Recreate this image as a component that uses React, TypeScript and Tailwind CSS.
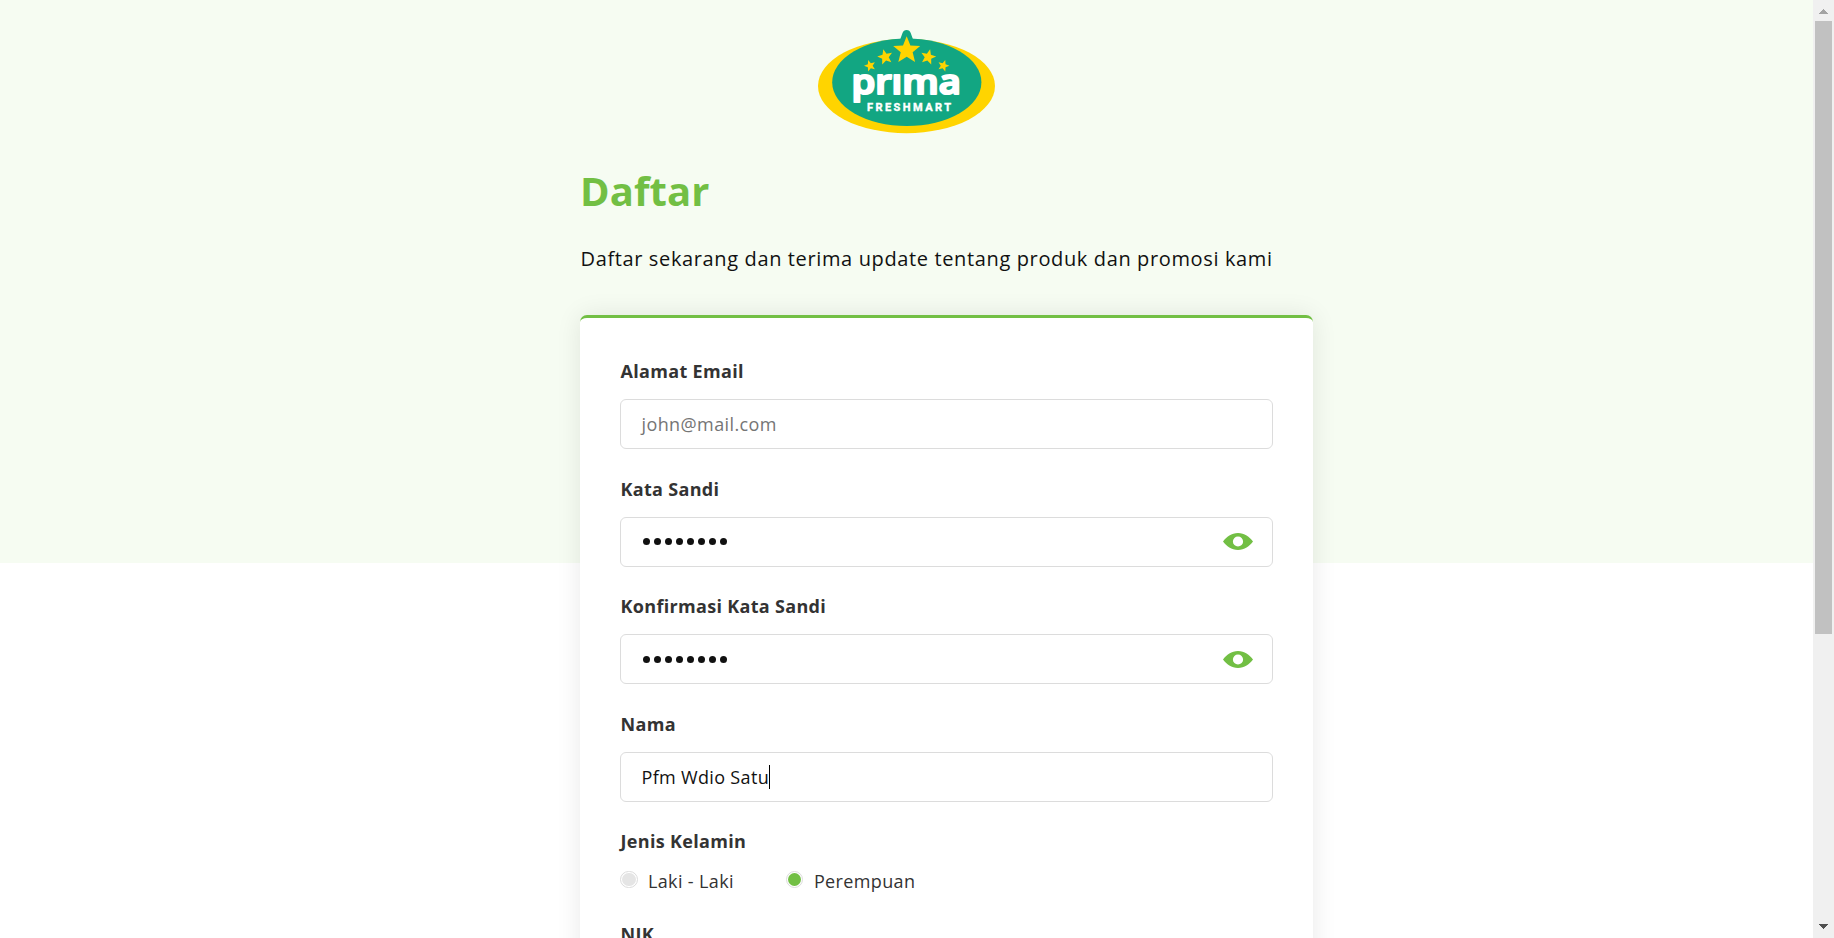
import type { ReactNode } from "react";

const STAR = "M0,-10 L2.6,-3.5 9.5,-3.1 4.2,1.3 5.9,8.1 0,4.4 -5.9,8.1 -4.2,1.3 -9.5,-3.1 -2.6,-3.5Z";

function Logo() {
  return (
    <svg width="178" height="104" viewBox="0 0 178 104" className="block">
      <ellipse cx="88.5" cy="56" rx="88.5" ry="47.2" fill="#ffd400" />
      <ellipse cx="88.8" cy="52.3" rx="74.6" ry="43.8" fill="#12a682" />
      <path d="M80.5 14 L84.5 3 Q85.5 0 88.6 0 Q91.7 0 92.7 3 L96.7 14Z" fill="#12a682" />
      <g fill="#ffd400">
        <path d={STAR} transform="translate(88.7 20.4) scale(1.42)" />
        <path d={STAR} transform="translate(67.2 27) rotate(-14) scale(.8)" />
        <path d={STAR} transform="translate(110.2 27) rotate(14) scale(.8)" />
        <path d={STAR} transform="translate(52 35.8) rotate(-18) scale(.6)" />
        <path d={STAR} transform="translate(125.4 35.8) rotate(18) scale(.6)" />
      </g>
      <text
        x="33.4"
        y="63.8"
        textLength="109.4"
        lengthAdjust="spacingAndGlyphs"
        fill="#fff"
        stroke="#fff"
        strokeWidth="2.2"
        strokeLinejoin="round"
        className="font-['Open_Sans',sans-serif] text-[34px] font-semibold"
      >
        prıma
      </text>
      <text
        x="49"
        y="80.5"
        textLength="84"
        lengthAdjust="spacing"
        fill="#fff"
        stroke="#fff"
        strokeWidth=".4"
        className="font-['Roboto',sans-serif] text-[11px] font-bold"
      >
        FRESHMART
      </text>
    </svg>
  );
}

function Eye() {
  return (
    <svg width="30" height="17" viewBox="0 0 30 17" className="block">
      <path
        fillRule="evenodd"
        fill="#72bf44"
        d="M0 8.5C3.5 4 8.5 0 15 0S26.5 4 30 8.5C26.5 13 21.5 17 15 17S3.5 13 0 8.5ZM15 3.4a5.1 5.1 0 1 0 0 10.2a5.1 5.1 0 1 0 0-10.2Z"
      />
    </svg>
  );
}

function Label({ children }: { children: ReactNode }) {
  return (
    <div className="h-6 pl-[0.5px] text-[18px] leading-6 font-bold tracking-[0.32px] whitespace-nowrap text-[#333]">
      {children}
    </div>
  );
}

function Field({ label, children }: { label: string; children: ReactNode }) {
  return (
    <div className="mb-[27.5px]">
      <Label>{label}</Label>
      <div className="mt-4 flex h-[50px] items-center justify-between rounded-md border border-[#dcdcdc] bg-white pr-[19px] pl-[20.5px] text-[18px] leading-6 text-[#111]">
        {children}
      </div>
    </div>
  );
}

function Password() {
  return (
    <>
      <div className="flex gap-[4.5px] pl-[1.5px]" aria-label="password">
        {Array.from({ length: 8 }, (_, i) => (
          <span key={i} className="h-[7px] w-[6.5px] rounded-full bg-[#111]" />
        ))}
      </div>
      <Eye />
    </>
  );
}

function Radio({ label, checked }: { label: string; checked?: boolean }) {
  return (
    <div className="flex items-start">
      <span
        className={
          checked
            ? "mr-[11px] flex h-[17px] w-[17px] items-center justify-center rounded-full border border-[#dcdcdc] bg-white"
            : "mr-2.5 flex h-[17px] w-[18px] items-center justify-center rounded-full border border-[#dcdcdc] bg-white"
        }
      >
        <span className={checked ? "h-[13px] w-[13px] rounded-full bg-[#72bf44]" : "h-[13px] w-[14px] rounded-full bg-[#e5e5e5]"} />
      </span>
      <span className="mt-[-2px] text-[18px] leading-6 tracking-[0.36px] whitespace-nowrap text-[#333]">{label}</span>
    </div>
  );
}

function Scrollbar() {
  return (
    <div className="flex h-full w-[21px] shrink-0 flex-col items-center bg-[#f0f0f0]">
      <svg width="9" height="5" viewBox="0 0 9 5" className="mt-[9px] block" shapeRendering="crispEdges">
        <path d="M4 0h1v1h1v1h1v1h1v1h1v1H0V4h1V3h1V2h1V1h1z" fill="#a3a3a3" />
      </svg>
      <div className="mt-[7px] h-[613px] w-[17px] bg-[#c1c1c1]" />
      <svg width="9" height="5" viewBox="0 0 9 5" className="mt-auto mb-[9px] block" shapeRendering="crispEdges">
        <path d="M0 0h9v1H8v1H7v1H6v1H5v1H4V4H3V3H2V2H1V1H0z" fill="#505050" />
      </svg>
    </div>
  );
}

export default function App() {
  return (
    <div className="flex h-[938px] w-[1834px] overflow-hidden bg-white font-['Open_Sans',sans-serif]">
      <main className="h-full min-w-0 flex-1 overflow-hidden bg-[linear-gradient(#f6fcf2_563px,#fff_563px)]">
        <div className="flex justify-center pt-[30px]">
          <Logo />
        </div>
        <div className="ml-[580px] w-[733px]">
          <h1 className="mt-[29px] h-14 text-[40px] leading-14 font-bold tracking-[0.1px] text-[#72bf44]">Daftar</h1>
          <p className="mt-[26px] h-7 pl-[0.5px] text-[20px] leading-7 tracking-[0.63px] whitespace-nowrap text-[#111]">
            Daftar sekarang dan terima update tentang produk dan promosi kami
          </p>
          <div className="mt-[42px] h-[900px] rounded-[7px] border-t-[3px] border-[#72bf44] bg-white px-10 pt-[41px] shadow-[0_0_26px_rgba(0,0,0,0.09)]">
            <Field label="Alamat Email">
              <span className="tracking-[0.4px] text-[#757575]">john@mail.com</span>
            </Field>
            <Field label="Kata Sandi">
              <Password />
            </Field>
            <Field label="Konfirmasi Kata Sandi">
              <Password />
            </Field>
            <Field label="Nama">
              <span className="flex items-center tracking-[0.33px]">
                Pfm Wdio Satu
                <span className="h-6 w-px bg-black" />
              </span>
            </Field>
            <Label>Jenis Kelamin</Label>
            <div className="mt-[18px] flex h-6 gap-[52px]">
              <Radio label="Laki - Laki" />
              <Radio label="Perempuan" checked />
            </div>
            <div className="mt-[27px]">
              <Label>NIK</Label>
            </div>
          </div>
        </div>
      </main>
      <Scrollbar />
    </div>
  );
}
